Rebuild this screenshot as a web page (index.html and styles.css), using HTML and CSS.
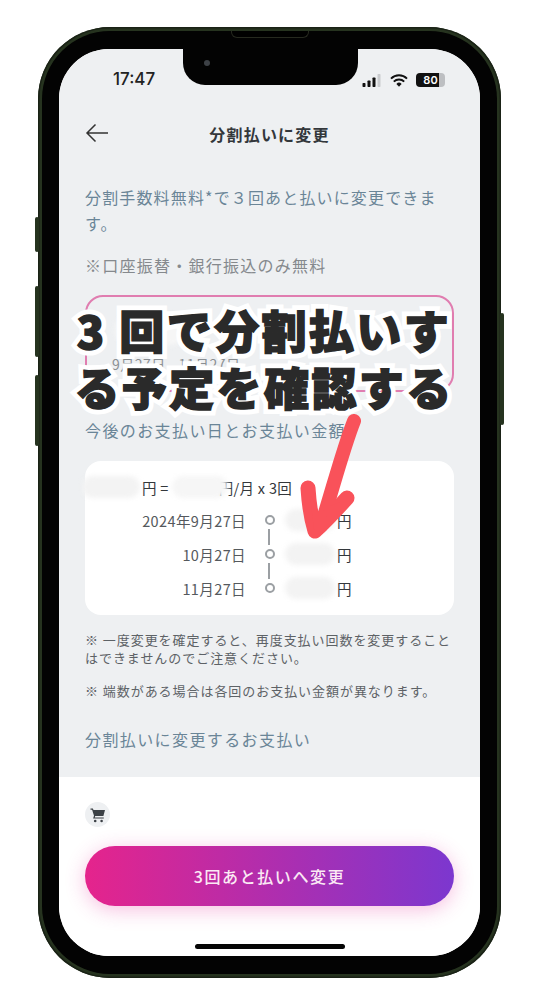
FILE: index.html
```html
<!DOCTYPE html>
<html lang="ja">
<head>
<meta charset="utf-8">
<title>分割払いに変更</title>
<link rel="stylesheet" href="styles.css">
</head>
<body>
<div class="phone">
  <span class="side side-mute"></span>
  <span class="side side-up"></span>
  <span class="side side-down"></span>
  <span class="side side-power"></span>
  <div class="bezel">
    <span class="speaker"></span>
    <div class="screen">
      <div class="notch"><span class="camera"></span></div>
      <main class="content">
        <div class="status">
          <span class="time">17:47</span>
          <span class="status-icons">
            <svg class="signal" width="20" height="13" viewBox="0 0 19 13"><rect x="0" y="9" width="3" height="4" rx=".7" fill="#111"/><rect x="5" y="6.5" width="3" height="6.5" rx=".7" fill="#111"/><rect x="10" y="3.5" width="3" height="9.5" rx=".7" fill="#111"/><rect x="15" y="0" width="3" height="13" rx=".7" fill="#c9cbce"/></svg>
            <svg class="wifi" width="18" height="13" viewBox="0 0 18 13"><path d="M1 4.6a11.4 11.4 0 0 1 16 0M3.8 7.6a7.4 7.4 0 0 1 10.4 0" fill="none" stroke="#111" stroke-width="2"/><path d="M6.4 9.9a3.7 3.7 0 0 1 5.2 0L9 12.8z" fill="#111"/></svg>
            <span class="battery"><span class="battery-num">80</span></span>
          </span>
        </div>
        <header class="nav">
          <svg class="back" width="24" height="20" viewBox="0 0 24 20"><path d="M23 10H2M10.5 1.5L2 10l8.5 8.5" fill="none" stroke="#333" stroke-width="1.5"/></svg>
          <h1 class="title">分割払いに変更</h1>
        </header>
        <p class="lead">分割手数料無料*で３回あと払いに変更できます。</p>
        <p class="hint">※口座振替・銀行振込のみ無料</p>
        <div class="plan">
          <span class="blur blur-plan"></span>
          <span class="plan-date">9月27日 - 11月27日</span>
        </div>
        <h2 class="subhead">今後のお支払い日とお支払い金額</h2>
        <section class="card">
          <div class="sum"><span class="blur blur-a"></span><span class="sum-eq">円 =</span><span class="blur blur-b"></span><span class="sum-tail">円/月 x 3回</span></div>
          <div class="rows">
            <div class="row"><span class="date">2024年9月27日</span><span class="dot"></span><span class="blur blur-c"></span><span class="yen">円</span></div>
            <div class="row"><span class="date">10月27日</span><span class="dot"></span><span class="blur blur-c"></span><span class="yen">円</span></div>
            <div class="row"><span class="date">11月27日</span><span class="dot"></span><span class="blur blur-c"></span><span class="yen">円</span></div>
          </div>
        </section>
        <p class="note note-1">※ 一度変更を確定すると、再度支払い回数を変更することはできませんのでご注意ください。</p>
        <p class="note note-2">※ 端数がある場合は各回のお支払い金額が異なります。</p>
        <h2 class="subhead subhead-last">分割払いに変更するお支払い</h2>
      </main>
      <footer class="footer">
        <span class="cart">
          <svg width="16" height="16" viewBox="0 0 16 16"><path d="M0.5 1.5h2.4l.6 1.6H15l-1.6 6H5.2l-.4 1.3h9v1.2H3.1l.9-2.9L2.1 2.7H.5z" fill="#3c4146"/><circle cx="5.2" cy="14" r="1.3" fill="#3c4146"/><circle cx="11.6" cy="14" r="1.3" fill="#3c4146"/></svg>
        </span>
        <button class="cta">3回あと払いへ変更</button>
        <span class="home"></span>
      </footer>
    </div>
  </div>
</div>
<div class="caption">
  <div class="caption-line" data-text="3 回で分割払いす">3 回で分割払いす</div>
  <div class="caption-line" data-text="る予定を確認する">る予定を確認する</div>
</div>
<svg class="arrow" width="90" height="130" viewBox="0 0 90 130"><path d="M70 7 C60 32 50 70 37 112" fill="none" stroke="#f9525a" stroke-width="14" stroke-linecap="round"/><path d="M24 74 C25 90 27 104 31 117 C43 106 54 94 63 84" fill="none" stroke="#f9525a" stroke-width="15" stroke-linecap="round" stroke-linejoin="round"/><path d="M26 80 L30 116 L56 88 L46 92 L36 100z" fill="#f9525a"/></svg>
</body>
</html>
```

FILE: styles.css
```css
* { box-sizing: border-box; }
html, body { margin: 0; padding: 0; }
body {
  width: 542px;
  height: 1007px;
  background: #fff;
  overflow: hidden;
  font-family: "Noto Sans CJK JP", "Noto Sans", sans-serif;
  padding: 27px 0 0 38px;
}
.phone {
  position: relative;
  width: 463px;
  height: 951px;
  background: #26331f;
  border-radius: 72px;
  padding: 4px;
  box-shadow: inset 0 0 0 1.5px #1a2216;
}
.side {
  position: absolute;
  width: 4px;
  background: #26331f;
  border-radius: 2px;
}
.side-mute { left: -3px; top: 190px; height: 35px; }
.side-up { left: -3px; top: 259px; height: 71px; }
.side-down { left: -3px; top: 348px; height: 71px; }
.side-power { right: -3px; top: 286px; height: 112px; }
.bezel {
  position: relative;
  height: 100%;
  background: #030303;
  border-radius: 68px;
  padding: 18px 17px;
}
.speaker {
  position: absolute;
  left: 189px;
  top: 0;
  width: 78px;
  height: 7px;
  background: #000;
  border: 1px solid #26291f;
  border-top: 0;
  border-radius: 0 0 6px 6px;
}
.screen {
  position: relative;
  height: 100%;
  border-radius: 50px;
  overflow: hidden;
  background: #fff;
  display: flex;
  flex-direction: column;
}
.notch {
  position: absolute;
  left: 124px;
  top: 0;
  width: 175px;
  height: 36px;
  background: #030303;
  border-radius: 0 0 22px 22px;
}
.camera {
  position: absolute;
  left: 21px;
  top: 11px;
  width: 6px;
  height: 6px;
  border-radius: 50%;
  background: #3d4146;
}
.content {
  flex: none;
  height: 728px;
  background: #eef0f2;
  padding: 0 26px;
}
.status {
  height: 48px;
  display: flex;
  align-items: flex-end;
  justify-content: space-between;
  padding: 0 35px 0 28px;
}
.time {
  font-family: Inter, "Noto Sans", sans-serif;
  font-size: 17px;
  line-height: 20px;
  font-weight: 500;
  color: #222;
  transform: translateY(-8px);
}
.status-icons {
  display: flex;
  align-items: center;
  gap: 8px;
  transform: translateY(-10px);
  margin-right: -26px;
}
.battery {
  width: 29px;
  height: 14px;
  border-radius: 4px;
  background: linear-gradient(90deg, #111 0 80%, #bdbfc2 80%);
  display: flex;
  align-items: center;
  justify-content: center;
}
.battery-num {
  font-family: Inter, sans-serif;
  font-size: 11px;
  font-weight: 600;
  line-height: 14px;
  color: #fff;
}
.nav {
  position: relative;
  height: 44px;
  margin-top: 15px;
  display: flex;
  align-items: center;
  justify-content: center;
}
.back { position: absolute; left: 0; top: 11px; }
.title {
  margin: 0;
  font-size: 16px;
  font-weight: 700;
  line-height: 24px;
  letter-spacing: 1.2px;
  color: #33373b;
}
.lead {
  margin: 28px 0 0;
  font-size: 16px;
  line-height: 26px;
  font-weight: 400;
  letter-spacing: 1.15px;
  color: #6a8597;
}
.hint {
  margin: 17px 0 0;
  font-size: 16px;
  line-height: 24px;
  letter-spacing: 1.25px;
  color: #85898d;
}
.plan {
  position: relative;
  height: 97px;
  margin-top: 18px;
  border: 2px solid #e07db0;
  border-radius: 18px;
  padding: 58px 0 0 25px;
}
.plan-date {
  display: block;
  font-size: 14px;
  line-height: 18px;
  letter-spacing: .5px;
  color: #8b8f93;
}
.blur {
  display: inline-block;
  border-radius: 14px;
  background: #f3f3f3;
  filter: blur(2.5px);
}
.blur-plan {
  position: absolute;
  left: 28px;
  top: 18px;
  width: 70px;
  height: 30px;
  background: #f6f6f6;
}
.subhead {
  margin: 26px 0 0;
  font-size: 16px;
  line-height: 24px;
  font-weight: 400;
  letter-spacing: 1.4px;
  color: #6a8597;
}
.card {
  height: 154px;
  margin-top: 19px;
  background: #fff;
  border-radius: 16px;
  padding-top: 14px;
}
.sum {
  display: flex;
  align-items: center;
  height: 24px;
  font-size: 14.5px;
  letter-spacing: .3px;
  color: #33373b;
  margin-left: -3px;
}
.sum-eq { margin-left: 2px; }
.sum-tail { margin-left: -9px; }
.blur-a { width: 58px; height: 22px; }
.blur-b { width: 56px; height: 22px; margin-left: 3px; position: relative; z-index: 1; background: #f6f6f6; }
.rows { margin-top: 4px; }
.row {
  display: flex;
  align-items: center;
  height: 34px;
  font-size: 14.5px;
  color: #55595d;
}
.date {
  width: 161px;
  text-align: right;
  letter-spacing: .4px;
}
.dot {
  position: relative;
  width: 10px;
  height: 10px;
  margin-left: 19px;
  border: 2px solid #9b9fa3;
  border-radius: 50%;
  background: #fff;
}
.row:not(:last-child) .dot::after {
  content: "";
  position: absolute;
  left: 1px;
  top: 12px;
  width: 2px;
  height: 16px;
  background: #9b9fa3;
}
.blur-c { width: 50px; height: 22px; margin-left: 10px; }
.yen { margin-left: 2px; color: #33373b; }
.note {
  margin: 0;
  font-size: 13px;
  line-height: 18px;
  letter-spacing: .95px;
  color: #5d6266;
}
.note-1 { margin-top: 16px; }
.note-2 { margin-top: 15px; }
.subhead-last { margin-top: 27px; }
.footer {
  position: relative;
  flex: 1;
  background: #fff;
  padding: 25px 26px 0;
}
.cart {
  display: flex;
  align-items: center;
  justify-content: center;
  width: 25px;
  height: 25px;
  border-radius: 50%;
  background: #eef0f2;
}
.cta {
  display: block;
  width: 100%;
  height: 60px;
  margin-top: 19px;
  border: 0;
  border-radius: 30px;
  font-family: inherit;
  font-size: 16px;
  font-weight: 500;
  letter-spacing: 1.6px;
  color: #fbe9f4;
  background: linear-gradient(90deg, #e5248c, #7c37cf);
  box-shadow: 0 4px 20px rgba(229, 60, 160, .32);
}
.home {
  position: absolute;
  left: 136px;
  bottom: 7px;
  width: 150px;
  height: 5px;
  border-radius: 3px;
  background: #050505;
}
.caption {
  position: absolute;
  left: 3px;
  top: 301px;
  width: 522px;
  text-align: center;
  font-size: 45px;
  line-height: 57px;
  font-weight: 900;
  letter-spacing: 2.4px;
  color: #2a2a2a;
  -webkit-text-stroke: 1.5px #2a2a2a;
}
.caption-line { position: relative; isolation: isolate; white-space: nowrap; }
.caption-line::before {
  content: attr(data-text);
  position: absolute;
  left: 0;
  right: 0;
  top: 0;
  z-index: -1;
  -webkit-text-stroke: 11px #fff;
  color: #fff;
}
.arrow {
  position: absolute;
  left: 284px;
  top: 414px;
}
```
